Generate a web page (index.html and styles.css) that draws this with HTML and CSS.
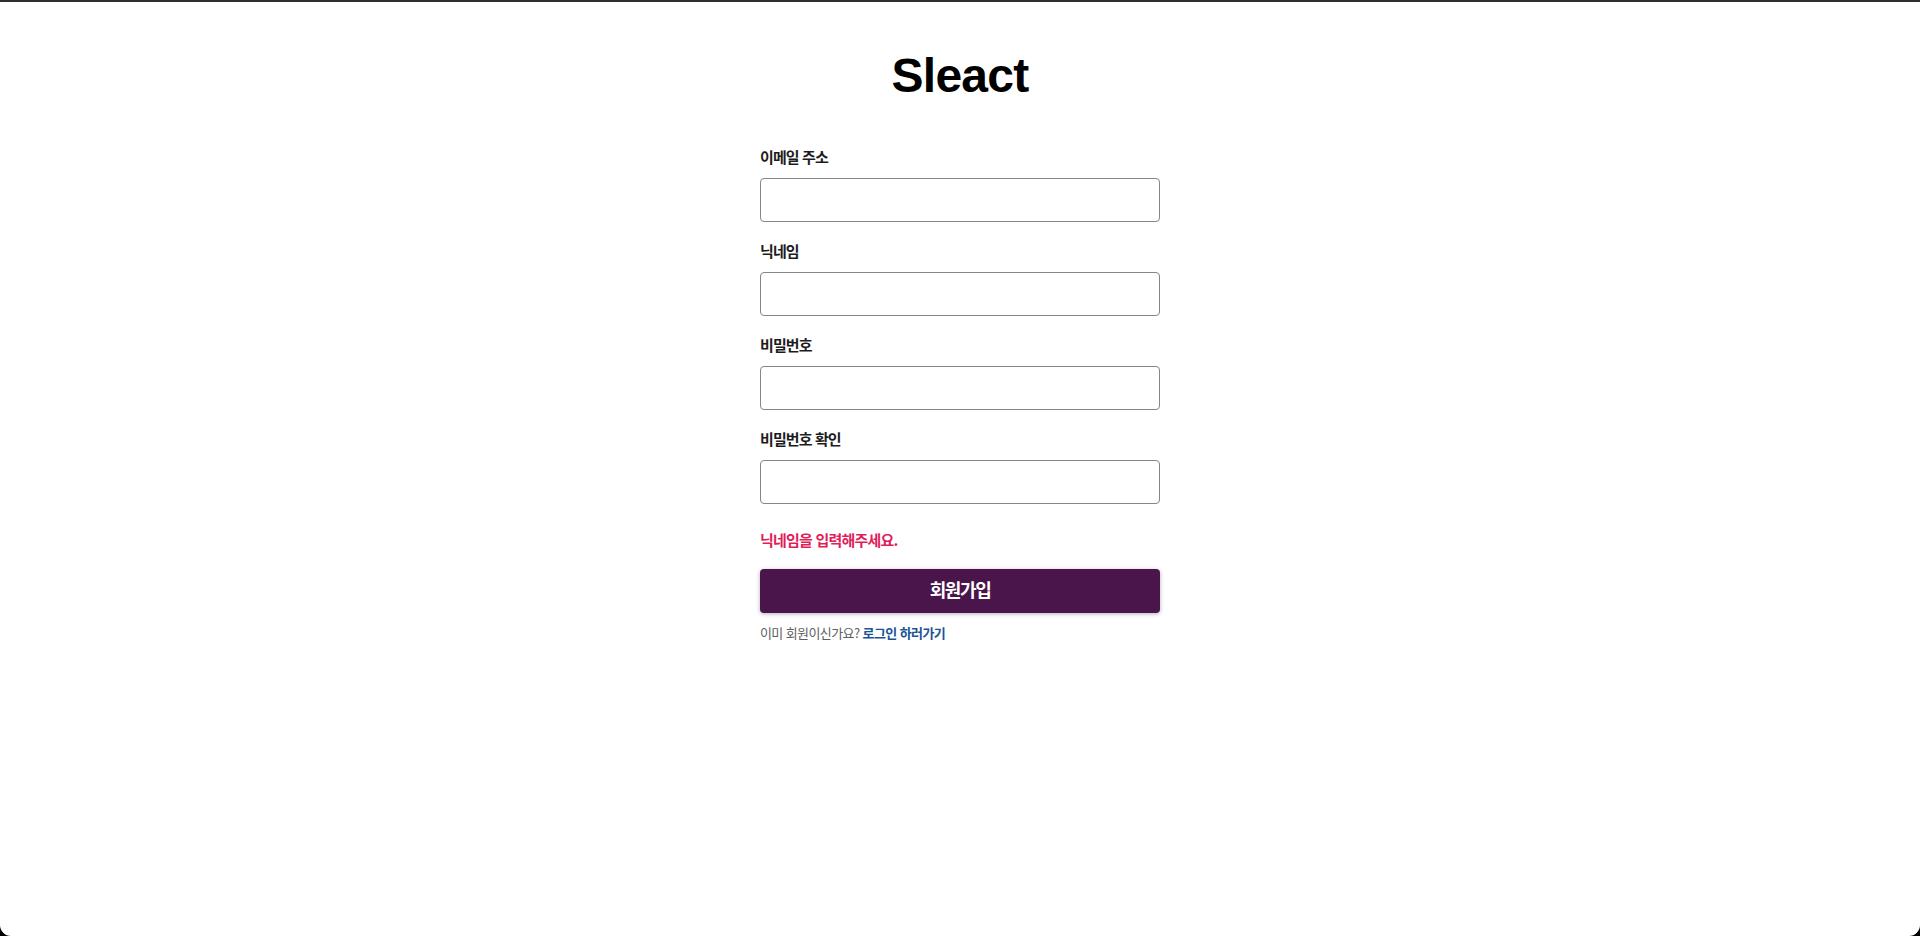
FILE: index.html
```
<!DOCTYPE html>
<html lang="ko">
<head>
<meta charset="utf-8">
<title>Sleact</title>
<link rel="stylesheet" href="styles.css">
</head>
<body>
<div class="page">
  <header class="logo">Sleact</header>
  <form class="form">
    <label class="field">
      <span class="label-text">이메일 주소</span>
      <div><input class="input" type="email"></div>
    </label>
    <label class="field">
      <span class="label-text">닉네임</span>
      <div><input class="input" type="text"></div>
    </label>
    <label class="field">
      <span class="label-text">비밀번호</span>
      <div><input class="input" type="password"></div>
    </label>
    <label class="field">
      <span class="label-text">비밀번호 확인</span>
      <div><input class="input" type="password"></div>
    </label>
    <div class="error">닉네임을 입력해주세요.</div>
    <button class="button" type="button">회원가입</button>
  </form>
  <p class="link-container">이미 회원이신가요?&nbsp;<a href="#">로그인 하러가기</a></p>
</div>
</body>
</html>
```
FILE: styles.css
```
html {
  margin: 0;
  padding: 0;
  background: #000;
}
body {
  margin: 0;
  padding: 0;
  font-family: "Noto Sans CJK KR", "Noto Sans", sans-serif;
  font-size: 15px;
  line-height: 1.46668;
  color: #1d1c1d;
}
.page {
  height: 934px;
  overflow: hidden;
  background: #fff;
  border-top: 2px solid #2e2e2e;
  border-radius: 0 0 11px 11px;
}
.logo {
  display: block;
  text-align: center;
  font-family: "Liberation Sans", Arial, sans-serif;
  font-weight: 700;
  font-size: 48px;
  line-height: 46px;
  letter-spacing: -0.75px;
  color: #000;
  margin: 51px 0 49px;
}
.form {
  margin: 0 auto;
  width: 400px;
  max-width: 400px;
}
.field {
  display: block;
}
.label-text {
  display: block;
  text-align: left;
  padding-bottom: 12px;
  font-size: 15px;
  line-height: 18px;
  font-weight: 700;
  letter-spacing: -0.9px;
  color: #1d1c1d;
}
.input {
  display: block;
  border-radius: 4px;
  border: 1px solid #868686;
  box-sizing: border-box;
  margin: 0 0 20px;
  width: 100%;
  height: 44px;
  padding: 11px 12px 13px;
  font-size: 18px;
  line-height: 1.33333;
  color: #1d1c1d;
  background: #fff;
  outline: none;
}
.error {
  color: #e01e5a;
  margin: 27px 0 20px;
  font-weight: 700;
  line-height: 18px;
  letter-spacing: -0.8px;
}
.button {
  display: block;
  margin: 0 0 12px;
  width: 100%;
  height: 44px;
  color: #fff;
  background-color: #4a154b;
  border: none;
  border-radius: 4px;
  font-family: "Noto Sans CJK KR", sans-serif;
  font-size: 18px;
  font-weight: 700;
  letter-spacing: -1.4px;
  padding: 0 16px 4px;
  box-shadow: 0 1px 4px rgba(0, 0, 0, 0.3);
  cursor: pointer;
}
.link-container {
  font-size: 13px;
  line-height: 16px;
  color: #616061;
  margin: 0 auto 8px;
  width: 400px;
  letter-spacing: -0.6px;
}
.link-container a {
  color: #1a5396;
  text-decoration: none;
  font-weight: 700;
}
```
